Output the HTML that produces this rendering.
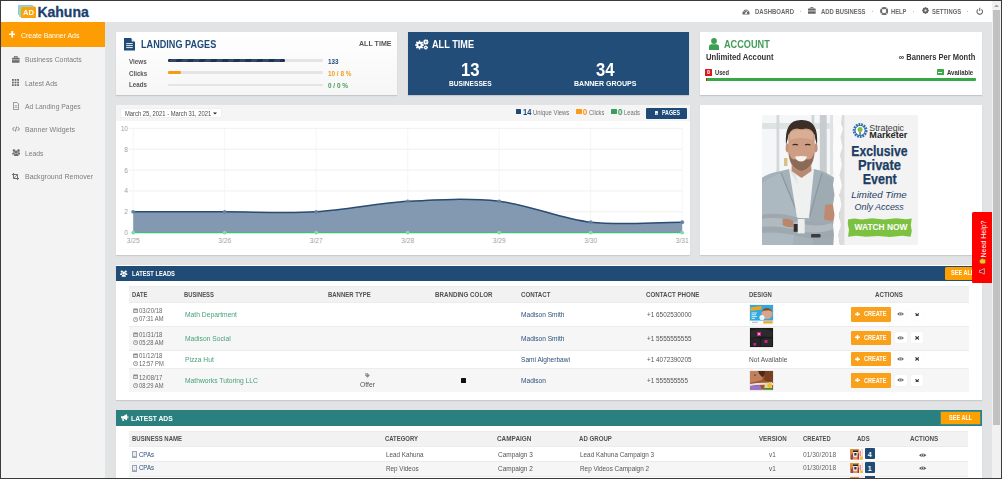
<!DOCTYPE html>
<html><head><meta charset="utf-8">
<style>
*{margin:0;padding:0;box-sizing:border-box}
html,body{width:1002px;height:479px;overflow:hidden;background:#fff;font-family:"Liberation Sans",sans-serif}
.a{position:absolute}
.t{position:absolute;white-space:nowrap;line-height:1}
#frame{position:absolute;left:0;top:0;width:1002px;height:479px;border:1px solid #3a3a3a;z-index:50;pointer-events:none}
#header{left:1px;top:1px;width:991px;height:21px;background:#fff}
#side{left:1px;top:22px;width:104px;height:456px;background:#f3f3f3}
#content{left:105px;top:22px;width:887px;height:456px;background:#e2e3e5}
#sb{left:992px;top:1px;width:9px;height:477px;background:#f1f1f1}
#thumb{left:993px;top:10px;width:7px;height:415px;background:#c1c1c1}
.card{position:absolute;background:#fff}
.nav{font-size:7px;font-weight:bold;color:#6a6a6a;top:7.9px}
.dot{width:1.7px;height:1.7px;background:#f99a1a;border-radius:1px;top:10.7px}
.menu{font-size:7.4px;color:#7d7d7d;left:25px}
.hdr{font-weight:bold;color:#fff}
.th{font-size:6.2px;font-weight:bold;color:#505050}
.td{font-size:6.3px;color:#555}
.lbl{font-size:7px;font-weight:bold;color:#585858}
.val{font-size:7px;font-weight:bold}
.ylab{font-size:6.6px;color:#a3a3a3}
.xlab{font-size:6.6px;color:#a3a3a3}
.leg{font-size:6.9px;color:#707070;top:110.1px}
</style></head><body>
<div id="frame"></div>
<div class="a" id="header"></div>
<div class="a" id="side"></div>
<div class="a" id="content"></div>
<div class="a" id="sb"></div>
<div class="a" id="thumb"></div>


<!-- logo -->
<div class="a" style="left:17.9px;top:4.8px;width:14.9px;height:10px;background:#94c3f3;border-radius:0.8px"></div>
<div class="a" style="left:19px;top:5.8px;width:15.5px;height:11px;background:#98dbb0;border-radius:0.8px"></div>
<div class="a" style="left:21px;top:7.3px;width:15px;height:10.5px;background:#fda20f;border-radius:0.5px"></div>
<div class="t" style="left: 22.8px; top: 8.8px; font-size: 8px; font-weight: bold; color: rgb(255, 255, 255); letter-spacing: 0px; transform: scaleX(0.9514); transform-origin: 0px 50%;">AD</div>
<div class="t" style="left:37.4px;top:5.1px;font-size:14px;font-weight:bold;color:#1b3f6e;-webkit-text-stroke:0.3px #1b3f6e">Kahuna</div>
<!-- nav -->
<svg class="a" style="left:742px;top:7.6px" width="8" height="7" viewBox="0 0 8 7"><path d="M0.6 6.4A3.6 3.6 0 1 1 7.4 6.4Z" fill="#6a6a6a"></path><path d="M4 5.2L5.8 2.6" stroke="#fff" stroke-width="0.9"></path><circle cx="4" cy="5.2" r="0.9" fill="#fff"></circle><circle cx="2" cy="3.6" r="0.5" fill="#fff"></circle><circle cx="4" cy="2.2" r="0.5" fill="#fff"></circle></svg>
<div class="t nav" style="left: 754.7px; letter-spacing: 0px; transform: scaleX(0.8571); transform-origin: 0px 50%;">DASHBOARD</div>
<div class="a dot" style="left:799.5px"></div>
<svg class="a" style="left:808px;top:7px" width="7.7" height="6.8" viewBox="0 0 7.7 6.8"><path d="M2.6 1.6V0.5H5.1V1.6" fill="none" stroke="#666" stroke-width="0.8"></path><rect x="0" y="1.5" width="7.7" height="5.3" rx="0.6" fill="#666"></rect><rect x="0" y="3.6" width="7.7" height="0.7" fill="#fff"></rect></svg>
<div class="t nav" style="left: 821px; letter-spacing: 0px; transform: scaleX(0.8411); transform-origin: 0px 50%;">ADD BUSINESS</div>
<div class="a dot" style="left:871.5px"></div>
<svg class="a" style="left:879.8px;top:7px" width="8.2" height="8.2" viewBox="0 0 8 8"><circle cx="4" cy="4" r="3" fill="none" stroke="#6a6a6a" stroke-width="1.9"></circle><path d="M1.3 1.3L2.7 2.7M6.7 1.3L5.3 2.7M1.3 6.7L2.7 5.3M6.7 6.7L5.3 5.3" stroke="#fff" stroke-width="0.8"></path></svg>
<div class="t nav" style="left: 891.4px; letter-spacing: 0px; transform: scaleX(0.8194); transform-origin: 0px 50%;">HELP</div>
<div class="a dot" style="left:912.5px"></div>
<svg class="a" style="left:921.5px;top:7px" width="7" height="7" viewBox="0 0 8 8"><circle cx="4" cy="4" r="2.6" fill="none" stroke="#666" stroke-width="1.6"></circle><path d="M4 0.2V7.8M0.2 4H7.8M1.3 1.3L6.7 6.7M6.7 1.3L1.3 6.7" stroke="#666" stroke-width="1.3"></path><circle cx="4" cy="4" r="1.1" fill="#fff"></circle></svg>
<div class="t nav" style="left: 932.2px; letter-spacing: 0px; transform: scaleX(0.8311); transform-origin: 0px 50%;">SETTINGS</div>
<div class="a dot" style="left:966.5px"></div>
<svg class="a" style="left:976px;top:6.5px" width="7.5" height="8" viewBox="0 0 8 8"><path d="M2.2 2.2A3 3 0 1 0 5.8 2.2" fill="none" stroke="#666" stroke-width="1.1"></path><path d="M4 0.5V4" stroke="#666" stroke-width="1.1"></path></svg>
<!-- scrollbar arrow -->
<svg class="a" style="left:993px;top:3px" width="7" height="5" viewBox="0 0 7 5"><path d="M1 4L3.5 1.5L6 4Z" fill="#a3a3a3"></path></svg>

<!-- sidebar -->
<div class="a" style="left:1px;top:22px;width:104px;height:25px;background:#fe9d03"></div>
<svg class="a" style="left:8.5px;top:31px" width="6.5" height="6.5" viewBox="0 0 6 6"><path d="M3 0V6M0 3H6" stroke="#fff" stroke-width="1.6"></path></svg>
<div class="t menu" style="left: 20.8px; top: 31.6px; color: rgb(255, 255, 255); letter-spacing: 0px; transform: scaleX(0.9351); transform-origin: 0px 50%;">Create Banner Ads</div>
<svg class="a" style="left:12px;top:55.5px" width="7.5" height="7" viewBox="0 0 8 7"><rect x="2.5" y="0.4" width="3" height="1.5" fill="none" stroke="#6d6d6d" stroke-width="0.8"></rect><rect x="0" y="1.6" width="8" height="5.4" rx="0.6" fill="#6d6d6d"></rect><rect x="0" y="3.6" width="8" height="0.6" fill="#f3f3f3"></rect></svg>
<div class="t menu" style="top: 56.1px; letter-spacing: 0px; transform: scaleX(0.9262); transform-origin: 0px 50%;">Business Contacts</div>
<svg class="a" style="left:12px;top:79px" width="7" height="7" viewBox="0 0 7 7" fill="#6d6d6d"><rect x="0" y="0" width="1.8" height="1.8"></rect><rect x="2.6" y="0" width="1.8" height="1.8"></rect><rect x="5.2" y="0" width="1.8" height="1.8"></rect><rect x="0" y="2.6" width="1.8" height="1.8"></rect><rect x="2.6" y="2.6" width="1.8" height="1.8"></rect><rect x="5.2" y="2.6" width="1.8" height="1.8"></rect><rect x="0" y="5.2" width="1.8" height="1.8"></rect><rect x="2.6" y="5.2" width="1.8" height="1.8"></rect><rect x="5.2" y="5.2" width="1.8" height="1.8"></rect></svg>
<div class="t menu" style="top: 79.6px; letter-spacing: 0px; transform: scaleX(0.9416); transform-origin: 0px 50%;">Latest Ads</div>
<svg class="a" style="left:12.5px;top:101.5px" width="6" height="8" viewBox="0 0 6 8"><path d="M0.4 0.4H4L5.6 2V7.6H0.4Z" fill="none" stroke="#777" stroke-width="0.8"></path><path d="M1.6 3.8H4.4M1.6 5.3H4.4" stroke="#777" stroke-width="0.6"></path></svg>
<div class="t menu" style="top: 103px; letter-spacing: 0px; transform: scaleX(0.9204); transform-origin: 0px 50%;">Ad Landing Pages</div>
<svg class="a" style="left:11.5px;top:126px" width="8" height="6" viewBox="0 0 8 6"><path d="M2.3 1L0.6 3L2.3 5M5.7 1L7.4 3L5.7 5M4.6 0.5L3.4 5.5" fill="none" stroke="#6d6d6d" stroke-width="0.8"></path></svg>
<div class="t menu" style="top: 126.4px; letter-spacing: 0px; transform: scaleX(0.9488); transform-origin: 0px 50%;">Banner Widgets</div>
<svg class="a" style="left:11.5px;top:148.5px" width="8.5" height="7.5" viewBox="0 0 8.5 7.5" fill="#6d6d6d"><circle cx="2" cy="1.6" r="1.3"></circle><circle cx="6.5" cy="1.6" r="1.3"></circle><circle cx="4.25" cy="3" r="1.5"></circle><path d="M0 5.5Q0 3.3 2 3.3Q2.8 3.3 3 3.6L2.5 5.5Z"></path><path d="M8.5 5.5Q8.5 3.3 6.5 3.3Q5.7 3.3 5.5 3.6L6 5.5Z"></path><path d="M1.8 7.5Q1.8 4.6 4.25 4.6Q6.7 4.6 6.7 7.5Z"></path></svg>
<div class="t menu" style="top: 149.8px; letter-spacing: 0px; transform: scaleX(0.9185); transform-origin: 0px 50%;">Leads</div>
<svg class="a" style="left:12px;top:172.5px" width="7" height="7" viewBox="0 0 7 7"><path d="M1.5 0V5.5H7M0 1.5H5.5V7" fill="none" stroke="#6d6d6d" stroke-width="1"></path><path d="M1.5 5.5L5.5 1.5" stroke="#6d6d6d" stroke-width="0.7"></path></svg>
<div class="t menu" style="top: 173.2px; letter-spacing: 0px; transform: scaleX(0.9513); transform-origin: 0px 50%;">Background Remover</div>

<!-- card 1 landing pages -->
<div class="card" style="left:116px;top:32px;width:281px;height:63px;background:linear-gradient(#fff,#f6f6f6);box-shadow:0 1px 1px rgba(0,0,0,0.12)"></div>
<svg class="a" style="left:124px;top:38px" width="11" height="12.5" viewBox="0 0 11 12.5"><path d="M0 0H7L11 4V12.5H0Z" fill="#1f4a78"></path><path d="M7.6 0.2V3.4H10.8Z" fill="#fff" opacity="0.85"></path><path d="M2.2 5.6H8.8M2.2 7.6H8.8M2.2 9.6H8.8" stroke="#fff" stroke-width="1" opacity="0.9"></path></svg>
<div class="t" style="left: 140.5px; top: 39.6px; font-size: 10.4px; font-weight: bold; color: rgb(31, 74, 120); letter-spacing: 0px; transform: scaleX(0.8762); transform-origin: 0px 50%;">LANDING PAGES</div>
<div class="t" style="left: 359px; top: 39.6px; font-size: 8px; font-weight: bold; color: rgb(85, 85, 85); letter-spacing: 0px; transform: scaleX(0.8844); transform-origin: 0px 50%;">ALL TIME</div>
<div class="t lbl" style="left: 129.4px; top: 57.7px; letter-spacing: 0px; transform: scaleX(0.8926); transform-origin: 0px 50%;">Views</div>
<div class="t lbl" style="left: 129.4px; top: 69.5px; letter-spacing: 0px; transform: scaleX(0.8824); transform-origin: 0px 50%;">Clicks</div>
<div class="t lbl" style="left: 129.4px; top: 81.4px; letter-spacing: 0px; transform: scaleX(0.8846); transform-origin: 0px 50%;">Leads</div>
<div class="a" style="left:168px;top:59.4px;width:155px;height:2.6px;border-radius:1.3px;background:#e3e5e7"></div>
<div class="a" style="left:168px;top:59.4px;width:116.6px;height:2.6px;border-radius:1.3px;background:repeating-linear-gradient(-60deg,#1e3350 0 5px,#34496a 5px 10px)"></div>
<div class="a" style="left:168px;top:71.3px;width:155px;height:2.6px;border-radius:1.3px;background:#e3e5e7"></div>
<div class="a" style="left:168px;top:71.3px;width:12.7px;height:2.6px;border-radius:1.3px;background:#f79c12"></div>
<div class="a" style="left:168px;top:83.5px;width:155px;height:2.6px;border-radius:1.3px;background:#e3e5e7"></div>
<div class="t val" style="left: 328px; top: 57.8px; color: rgb(31, 74, 120); letter-spacing: 0px; transform: scaleX(0.8984); transform-origin: 0px 50%;">133</div>
<div class="t val" style="left: 328px; top: 69.6px; color: rgb(245, 156, 26); letter-spacing: 0px; transform: scaleX(0.9109); transform-origin: 0px 50%;">10 / 8 %</div>
<div class="t val" style="left: 328px; top: 81.5px; color: rgb(63, 154, 90); letter-spacing: 0px; transform: scaleX(0.9176); transform-origin: 0px 50%;">0 / 0 %</div>

<!-- card 2 all time -->
<div class="card" style="left:408px;top:32px;width:281.2px;height:62.6px;background:#214d78;box-shadow:0 1px 1px rgba(0,0,0,0.12)"></div>
<svg class="a" style="left:414.5px;top:38.5px" width="14" height="11" viewBox="0 0 14 11"><g fill="#fff"><circle cx="4.5" cy="6" r="3.2"></circle><path d="M4.5 1.6V10.4M0.1 6H8.9M1.4 2.9L7.6 9.1M7.6 2.9L1.4 9.1" stroke="#fff" stroke-width="1.6"></path><circle cx="10.8" cy="3" r="2"></circle><path d="M10.8 0.2V5.8M8 3H13.6M8.8 1L12.8 5M12.8 1L8.8 5" stroke="#fff" stroke-width="1.1"></path><circle cx="10.8" cy="8.6" r="1.6"></circle><path d="M10.8 6.4V10.8M8.6 8.6H13M9.3 7.1L12.3 10.1M12.3 7.1L9.3 10.1" stroke="#fff" stroke-width="0.9"></path></g><circle cx="4.5" cy="6" r="1.2" fill="#214d78"></circle><circle cx="10.8" cy="3" r="0.8" fill="#214d78"></circle><circle cx="10.8" cy="8.6" r="0.6" fill="#214d78"></circle></svg>
<div class="t hdr" style="left: 432px; top: 39.9px; font-size: 10.4px; letter-spacing: 0px; transform: scaleX(0.8802); transform-origin: 0px 50%;">ALL TIME</div>
<div class="t hdr" style="left: 460.6px; top: 59.9px; font-size: 19px; letter-spacing: 0px; transform: scaleX(0.8798); transform-origin: 0px 50%;">13</div>
<div class="t hdr" style="left: 448.5px; top: 79.9px; font-size: 7px; letter-spacing: 0px; transform: scaleX(0.9463); transform-origin: 0px 50%;">BUSINESSES</div>
<div class="t hdr" style="left: 595.5px; top: 59.9px; font-size: 19px; letter-spacing: 0px; transform: scaleX(0.8751); transform-origin: 0px 50%;">34</div>
<div class="t hdr" style="left: 573.8px; top: 79.9px; font-size: 7px; letter-spacing: 0px; transform: scaleX(1.0043); transform-origin: 0px 50%;">BANNER GROUPS</div>

<!-- card 3 account -->
<div class="card" style="left:700px;top:32px;width:282px;height:63px;box-shadow:0 1px 1px rgba(0,0,0,0.12)"></div>
<svg class="a" style="left:708.5px;top:38px" width="10" height="12" viewBox="0 0 10 12" fill="#3e9e55"><circle cx="5" cy="3" r="2.9"></circle><path d="M0 12V9Q0 6.3 2.6 6.3H7.4Q10 6.3 10 9V12Z"></path></svg>
<div class="t" style="left: 724px; top: 39.6px; font-size: 10.4px; font-weight: bold; color: rgb(62, 158, 85); letter-spacing: 0px; transform: scaleX(0.8816); transform-origin: 0px 50%;">ACCOUNT</div>
<div class="t" style="left: 705.5px; top: 52.7px; font-size: 8.6px; font-weight: bold; color: rgb(51, 51, 51); letter-spacing: 0px; transform: scaleX(0.8929); transform-origin: 0px 50%;">Unlimited Account</div>
<div class="t" style="right: 26.5px; top: 52.7px; font-size: 8.6px; font-weight: bold; color: rgb(51, 51, 51); letter-spacing: 0px; transform: scaleX(0.8762); transform-origin: 100% 50%;">∞ Banners Per Month</div>
<div class="a" style="left:705.4px;top:68.9px;width:6.5px;height:6.9px;background:#d9161c;border-radius:0.6px"></div>
<div class="t" style="left:707.1px;top:70.1px;font-size:5.6px;font-weight:bold;color:#fff">0</div>
<div class="t" style="left: 714.8px; top: 70.1px; font-size: 6.7px; font-weight: bold; color: rgb(51, 51, 51); letter-spacing: 0px; transform: scaleX(0.8558); transform-origin: 0px 50%;">Used</div>
<div class="a" style="left:936.6px;top:68.8px;width:7px;height:6.5px;background:#3aaa4a;border-radius:0.5px"></div>
<div class="a" style="left:938.3px;top:71.5px;width:3.6px;height:1.2px;background:#fff"></div>
<div class="t" style="left: 946.8px; top: 70px; font-size: 6.7px; font-weight: bold; color: rgb(51, 51, 51); letter-spacing: 0px; transform: scaleX(0.8996); transform-origin: 0px 50%;">Available</div>
<div class="a" style="left:705.5px;top:78px;width:270px;height:2.6px;border-radius:1px;background:#37a847"></div>
<div class="a" style="left:705.5px;top:78px;width:1px;height:2.6px;background:#d9161c"></div>

<!-- chart card -->
<div class="card" style="left:116px;top:105px;width:574px;height:150px;box-shadow:0 1px 1px rgba(0,0,0,0.1)"></div>
<div class="a" style="left:116px;top:105px;width:574px;height:16px;background:#f5f5f5"></div>
<div class="a" style="left:119.8px;top:107.8px;width:102.2px;height:10.5px;background:#fff;border:0.5px solid #f0f0f0"></div>
<div class="t" style="left: 125.2px; top: 110.5px; font-size: 6.6px; color: rgb(74, 74, 74); letter-spacing: 0px; transform: scaleX(0.8841); transform-origin: 0px 50%;">March 25, 2021 - March 31, 2021</div>
<svg class="a" style="left:213.2px;top:112.3px" width="4" height="3" viewBox="0 0 4 3"><path d="M0 0.4H4L2 2.6Z" fill="#222"></path></svg>
<div class="a" style="left:515.5px;top:108.8px;width:5.6px;height:5.1px;background:#1f4a78;border-radius:0.6px"></div>
<div class="t" style="left: 522.8px; top: 107.8px; font-size: 8.4px; font-weight: bold; color: rgb(31, 74, 120); letter-spacing: 0px; transform: scaleX(0.9005); transform-origin: 0px 50%;">14</div>
<div class="t leg" style="left: 532.7px; letter-spacing: 0px; transform: scaleX(0.864); transform-origin: 0px 50%;">Unique Views</div>
<div class="a" style="left:576.4px;top:108.8px;width:5.6px;height:5.1px;background:#f99b1c;border-radius:0.6px"></div>
<div class="t" style="left:582.8px;top:107.8px;font-size:8.4px;font-weight:bold;color:#f99b1c">0</div>
<div class="t leg" style="left: 588.7px; letter-spacing: 0px; transform: scaleX(0.8327); transform-origin: 0px 50%;">Clicks</div>
<div class="a" style="left:611.3px;top:108.8px;width:5.6px;height:5.1px;background:#3a9e5f;border-radius:0.6px"></div>
<div class="t" style="left:617.8px;top:107.8px;font-size:8.4px;font-weight:bold;color:#3a9e5f">0</div>
<div class="t leg" style="left: 623.8px; letter-spacing: 0px; transform: scaleX(0.8413); transform-origin: 0px 50%;">Leads</div>
<div class="a" style="left:646px;top:107.5px;width:40.7px;height:11.3px;background:#1f4a78;border-radius:1px"></div>
<svg class="a" style="left:654.6px;top:111px" width="3.8" height="4.4" viewBox="0 0 4.5 5.5"><path d="M0 0H3L4.5 1.5V5.5H0Z" fill="#fff"></path><path d="M1 3H3.5M1 4.2H3.5" stroke="#1f4a78" stroke-width="0.5"></path></svg>
<div class="t" style="left: 661.7px; top: 109.6px; font-size: 6.6px; font-weight: bold; color: rgb(255, 255, 255); letter-spacing: 0px; transform: scaleX(0.7961); transform-origin: 0px 50%;">PAGES</div>
<svg class="a" style="left:0;top:0" width="1002" height="479" viewBox="0 0 1002 479">
<path d="M129 128.4H682.2" stroke="#ececec" stroke-width="0.8"></path><path d="M129 149.2H682.2" stroke="#ececec" stroke-width="0.8"></path><path d="M129 170.1H682.2" stroke="#ececec" stroke-width="0.8"></path><path d="M129 190.9H682.2" stroke="#ececec" stroke-width="0.8"></path><path d="M129 211.8H682.2" stroke="#ececec" stroke-width="0.8"></path><path d="M133.2 127.5V232.6" stroke="#f2f2f2" stroke-width="0.8"></path><path d="M224.7 127.5V232.6" stroke="#f2f2f2" stroke-width="0.8"></path><path d="M316.2 127.5V232.6" stroke="#f2f2f2" stroke-width="0.8"></path><path d="M407.7 127.5V232.6" stroke="#f2f2f2" stroke-width="0.8"></path><path d="M499.2 127.5V232.6" stroke="#f2f2f2" stroke-width="0.8"></path><path d="M590.7 127.5V232.6" stroke="#f2f2f2" stroke-width="0.8"></path><path d="M682.2 127.5V232.6" stroke="#f2f2f2" stroke-width="0.8"></path>
<path d="M133.2,211.8C163.7,211.8,194.2,211.8,224.7,211.8C255.2,211.8,285.7,213.5,316.2,211.8C346.7,210.0,377.2,203.1,407.7,201.3C438.2,199.6,468.7,197.9,499.2,201.3C529.7,204.8,560.2,218.7,590.7,222.2C621.2,225.7,651.7,222.2,682.2,222.2L682.2,232.6L133.2,232.6Z" fill="#8399b1"></path>
<path d="M133.2,211.8C163.7,211.8,194.2,211.8,224.7,211.8C255.2,211.8,285.7,213.5,316.2,211.8C346.7,210.0,377.2,203.1,407.7,201.3C438.2,199.6,468.7,197.9,499.2,201.3C529.7,204.8,560.2,218.7,590.7,222.2C621.2,225.7,651.7,222.2,682.2,222.2" fill="none" stroke="#2a4b72" stroke-width="1.5"></path>
<path d="M133.2 232.6H682.2" stroke="#3fc07a" stroke-width="1.2"></path>
<circle cx="133.2" cy="211.8" r="1.9" fill="#6582a3"></circle><circle cx="133.2" cy="232.6" r="1.9" fill="#86d9a6"></circle><circle cx="224.7" cy="211.8" r="1.9" fill="#6582a3"></circle><circle cx="224.7" cy="232.6" r="1.9" fill="#86d9a6"></circle><circle cx="316.2" cy="211.8" r="1.9" fill="#6582a3"></circle><circle cx="316.2" cy="232.6" r="1.9" fill="#86d9a6"></circle><circle cx="407.7" cy="201.3" r="1.9" fill="#6582a3"></circle><circle cx="407.7" cy="232.6" r="1.9" fill="#86d9a6"></circle><circle cx="499.2" cy="201.3" r="1.9" fill="#6582a3"></circle><circle cx="499.2" cy="232.6" r="1.9" fill="#86d9a6"></circle><circle cx="590.7" cy="222.2" r="1.9" fill="#6582a3"></circle><circle cx="590.7" cy="232.6" r="1.9" fill="#86d9a6"></circle><circle cx="682.2" cy="222.2" r="1.9" fill="#6582a3"></circle><circle cx="682.2" cy="232.6" r="1.9" fill="#86d9a6"></circle>
</svg>
<div class="t ylab" style="right:874.0px;top:125.8px">10</div>
<div class="t ylab" style="right:874.0px;top:146.6px">8</div>
<div class="t ylab" style="right:874.0px;top:167.5px">6</div>
<div class="t ylab" style="right:874.0px;top:188.3px">4</div>
<div class="t ylab" style="right:874.0px;top:209.2px">2</div>
<div class="t ylab" style="right:874.0px;top:230.0px">0</div>
<div class="t xlab" style="left:133.2px;top:237.6px;transform:translateX(-50%)">3/25</div>
<div class="t xlab" style="left:224.7px;top:237.6px;transform:translateX(-50%)">3/26</div>
<div class="t xlab" style="left:316.2px;top:237.6px;transform:translateX(-50%)">3/27</div>
<div class="t xlab" style="left:407.7px;top:237.6px;transform:translateX(-50%)">3/28</div>
<div class="t xlab" style="left:499.2px;top:237.6px;transform:translateX(-50%)">3/29</div>
<div class="t xlab" style="left:590.7px;top:237.6px;transform:translateX(-50%)">3/30</div>
<div class="t xlab" style="left:682.2px;top:237.6px;transform:translateX(-50%)">3/31</div>

<!-- ad card -->
<div class="card" style="left:700px;top:105px;width:282px;height:150px;box-shadow:0 1px 1px rgba(0,0,0,0.1)"></div>

<!-- ad creative -->
<svg class="a" style="left:762px;top:115px" width="156" height="130" viewBox="0 0 156 130">
<defs><filter id="bl" x="-5%" y="-5%" width="110%" height="110%"><feGaussianBlur stdDeviation="0.7"></feGaussianBlur></filter><clipPath id="pc"><rect x="0" y="0" width="80" height="130"></rect></clipPath></defs>
<rect x="0" y="0" width="156" height="130" fill="#f3f3f3"></rect>
<g clip-path="url(#pc)"><g filter="url(#bl)">
<rect x="-2" y="-2" width="84" height="134" fill="#f4f6f7"></rect>
<rect x="-2" y="8" width="84" height="6" fill="#dde2e3"></rect>
<rect x="14.5" y="0" width="2.8" height="80" fill="#d3d8da"></rect>
<rect x="49.6" y="0" width="2.7" height="14" fill="#cfd4d6"></rect>
<rect x="57.8" y="0" width="6.9" height="90" fill="#c7ccce"></rect>
<rect x="68" y="0" width="3" height="60" fill="#dfe3e4"></rect>
<rect x="22" y="43" width="3.5" height="8" fill="#d8c08a"></rect>
<!-- suit -->
<path d="M-2 64Q6 58 19 56L27 54L39 64L52 54L60 56Q70 60 76 66L78 132H-2Z" fill="#a4b1b9"></path>
<path d="M-2 70Q8 62 19 58L36 102L30 132H-2Z" fill="#adb9c0"></path>
<path d="M78 72Q70 62 60 58L47.5 102L52 132H78Z" fill="#9eabb3"></path>
<path d="M19 58L37 102" stroke="#8d979d" stroke-width="1.2"></path>
<path d="M60 58L47.5 102" stroke="#8d979d" stroke-width="1.2"></path>
<!-- shirt -->
<path d="M27 54L39 63L52 54L47 103L35 103Z" fill="#eff1f1"></path>
<path d="M27 54L34 60L36 70Z" fill="#dfe3e4"></path>
<!-- arms -->
<path d="M-2 100Q18 96 40 104Q56 110 72 104L76 120Q58 126 40 122Q18 116 -2 118Z" fill="#9ea8ae"></path>
<path d="M-2 104Q18 101 38 108Q54 113 70 108L72 114Q54 120 38 116Q18 110 -2 112Z" fill="#b0babf"></path>
<path d="M63 90Q70 88 74.5 92L73 105Q67 107 62 104Z" fill="#c08a70"></path>
<path d="M20.6 104Q26 103 31.7 106L31 112Q25 113 20.6 110Z" fill="#b9876c"></path>
<rect x="31.7" y="109" width="5.5" height="7.8" fill="#2f2f2f"></rect>
<rect x="35.7" y="104" width="7" height="14.4" fill="#eceeee"></rect>
<rect x="49" y="119" width="9.6" height="3.4" rx="1" fill="#3a3d40"></rect>
<!-- neck & head -->
<path d="M30 44H49L49.5 56L39.5 63L29.5 56Z" fill="#b98a72"></path>
<ellipse cx="25.6" cy="33" rx="2" ry="4.4" fill="#c2917a"></ellipse>
<ellipse cx="53.6" cy="33" rx="2" ry="4.4" fill="#c2917a"></ellipse>
<path d="M26.3 22Q26.3 11 39.5 11Q52.7 11 52.7 22L52.7 38Q51 55 39.5 56Q28 55 26.3 38Z" fill="#cd9e84"></path>
<path d="M28 17Q39.5 12.5 51 17L51 25Q39.5 21 28 25Z" fill="#d8ae94"></path>
<path d="M26.6 37Q28 54 39.5 56Q51 54 52.4 37Q50.5 45 46 44.5Q39.5 42.5 33 44.5Q28.5 45 26.6 37Z" fill="#8c6a58"></path>
<path d="M33 41.6Q39 40.3 45 41.6Q43.6 46.6 39 46.6Q34.4 46.6 33 41.6Z" fill="#f6f1ec"></path>
<path d="M30.5 30Q33.3 28.7 36 30M43 30Q45.7 28.7 48.5 30" fill="none" stroke="#3a2a22" stroke-width="1.1"></path>
<path d="M24 30Q22 4.5 39.5 5Q57 4.5 55 30L53.3 24Q52.5 14 44 13.5Q39.5 15 35 13.5Q26.5 14 25.7 24Z" fill="#3b2e28"></path>
</g></g>
<!-- torn edge -->
<path d="M71.3 0H80L79 8L81 14L78.5 22L80.5 32L78 40L80 50L77.5 60L80 70L77.5 80L79.5 90L77 100L79 110L76.5 120L78 130H71.3L72 120L71 110L72.5 100L71 90L72.5 80L71 70L72.5 60L71 50L72.5 40L71 30L72.5 20L71 10Z" fill="#fbfbfb"></path>
<path d="M80 0L79 8L81 14L78.5 22L80.5 32L78 40L80 50L77.5 60L80 70L77.5 80L79.5 90L77 100L79 110L76.5 120L78 130H82.4V0Z" fill="#dcdcdc"></path>
<!-- logo -->
<circle cx="98.1" cy="15.5" r="6" fill="none" stroke="#2f6fb3" stroke-width="2.8" stroke-dasharray="1.7 0.9"></circle>
<circle cx="98.1" cy="15.5" r="5.1" fill="none" stroke="#2f6fb3" stroke-width="1"></circle>
<circle cx="98.1" cy="15.5" r="4.2" fill="#fff"></circle>
<circle cx="98.1" cy="14.6" r="2.5" fill="#7cc242"></circle>
<rect x="97.1" y="17" width="2" height="3.2" fill="#8a8a8a"></rect>
<text x="107.3" y="15.6" font-family="Liberation Sans" font-size="8.8" fill="#3a3a3a" textLength="34.7" lengthAdjust="spacingAndGlyphs">Strategic</text>
<text x="107.3" y="23" font-family="Liberation Sans" font-size="8.8" font-weight="bold" fill="#1f1f1f" textLength="38" lengthAdjust="spacingAndGlyphs">Marketer</text>
<g font-family="Liberation Sans" font-weight="bold" fill="#1d3d63" font-size="14" stroke="#1d3d63" stroke-width="0.25">
<text x="89.3" y="41.1" textLength="56.2" lengthAdjust="spacingAndGlyphs">Exclusive</text>
<text x="95.9" y="55" textLength="43.1" lengthAdjust="spacingAndGlyphs">Private</text>
<text x="100.7" y="69.2" textLength="34" lengthAdjust="spacingAndGlyphs">Event</text>
</g>
<g font-family="Liberation Sans" font-style="italic" fill="#1d3d63" font-size="9.6">
<text x="89.3" y="82.8" textLength="55.4" lengthAdjust="spacingAndGlyphs">Limited Time</text>
<text x="92.5" y="95" textLength="49.3" lengthAdjust="spacingAndGlyphs">Only Access</text>
</g>
<path d="M86 104.5L92 103.4L100 104.6L110 103.3L122 104.5L134 103.2L144 104.3L149.8 103.6L148.8 110L149.8 116L148.6 121.8L140 120.8L128 122L116 120.9L104 121.8L94 120.7L86 121.8L87 115L85.8 109Z" fill="#7dc141"></path>
<text x="92.5" y="115" font-family="Liberation Sans" font-weight="bold" font-size="8.6" fill="#fff" textLength="53" lengthAdjust="spacingAndGlyphs">WATCH NOW</text>
</svg>









<!-- tables -->
<div class="card" style="left:116px;top:265px;width:866px;height:134.5px;box-shadow:0 1px 1px rgba(0,0,0,0.1)"></div>
<div class="a" style="left:116px;top:265.5px;width:866px;height:15.5px;background:#1f4b76"></div>
<svg class="a" style="left:120px;top:269.5px" width="7.5" height="7" viewBox="0 0 8.5 7.5" fill="#fff"><circle cx="2" cy="1.6" r="1.3"></circle><circle cx="6.5" cy="1.6" r="1.3"></circle><circle cx="4.25" cy="3" r="1.5"></circle><path d="M0 5.5Q0 3.3 2 3.3Q2.8 3.3 3 3.6L2.5 5.5Z"></path><path d="M8.5 5.5Q8.5 3.3 6.5 3.3Q5.7 3.3 5.5 3.6L6 5.5Z"></path><path d="M1.8 7.5Q1.8 4.6 4.25 4.6Q6.7 4.6 6.7 7.5Z"></path></svg>
<div class="t hdr" style="left: 131.8px; top: 269.7px; font-size: 7.3px; letter-spacing: 0px; transform: scaleX(0.7858); transform-origin: 0px 50%;">LATEST LEADS</div>
<div class="a" style="left:945px;top:266.8px;width:40px;height:12.8px;background:#ffa000;border-radius:1.5px"></div>
<div class="t hdr" style="left: 950.9px; top: 270px; font-size: 6.5px; letter-spacing: 0px; transform: scaleX(0.8524); transform-origin: 0px 50%;">SEE ALL</div>
<div class="a" style="left:129px;top:286.0px;width:839.6px;height:16.0px;background:#f2f2f2;border-top:0.5px solid #ececec"></div>
<div class="a" style="left:129px;top:302.0px;width:839.6px;height:24.0px;background:#fff;border-top:0.5px solid #ececec"></div>
<div class="a" style="left:129px;top:326.0px;width:839.6px;height:24.0px;background:#f6f6f6;border-top:0.5px solid #ececec"></div>
<div class="a" style="left:129px;top:350.0px;width:839.6px;height:18.0px;background:#fff;border-top:0.5px solid #ececec"></div>
<div class="a" style="left:129px;top:368.0px;width:839.6px;height:24.4px;background:#f6f6f6;border-top:0.5px solid #ececec"></div>
<div class="t th" style="left: 131.8px; top: 291.9px; font-size: 6.9px; letter-spacing: 0px; transform: scaleX(0.8384); transform-origin: 0px 50%;">DATE</div>
<div class="t th" style="left: 184px; top: 291.9px; font-size: 6.9px; letter-spacing: 0px; transform: scaleX(0.8458); transform-origin: 0px 50%;">BUSINESS</div>
<div class="t th" style="left: 328.1px; top: 291.9px; font-size: 6.9px; letter-spacing: 0px; transform: scaleX(0.8645); transform-origin: 0px 50%;">BANNER TYPE</div>
<div class="t th" style="left: 434.8px; top: 291.9px; font-size: 6.9px; letter-spacing: 0px; transform: scaleX(0.8993); transform-origin: 0px 50%;">BRANDING COLOR</div>
<div class="t th" style="left: 520.5px; top: 291.9px; font-size: 6.9px; letter-spacing: 0px; transform: scaleX(0.8863); transform-origin: 0px 50%;">CONTACT</div>
<div class="t th" style="left: 645.8px; top: 291.9px; font-size: 6.9px; letter-spacing: 0px; transform: scaleX(0.8977); transform-origin: 0px 50%;">CONTACT PHONE</div>
<div class="t th" style="left: 748.5px; top: 291.9px; font-size: 6.9px; letter-spacing: 0px; transform: scaleX(0.8629); transform-origin: 0px 50%;">DESIGN</div>
<div class="t th" style="left: 874.6px; top: 291.9px; font-size: 6.9px; letter-spacing: 0px; transform: scaleX(0.8963); transform-origin: 0px 50%;">ACTIONS</div>
<svg class="a" style="left:133.3px;top:307.9px" width="5.1" height="5.1" viewBox="0 0 5 5"><rect x="0.2" y="0.6" width="4.6" height="4.2" rx="0.4" fill="#8a8a8a"></rect><rect x="0.9" y="2" width="3.2" height="2.2" fill="#dcdcdc"></rect></svg>
<div class="t td" style="left: 139.2px; top: 308.3px; font-size: 6.6px; color: rgb(102, 102, 102); letter-spacing: 0px; transform: scaleX(0.9076); transform-origin: 0px 50%;">03/20/18</div>
<svg class="a" style="left:133.4px;top:316.6px" width="5.1" height="5.1" viewBox="0 0 5 5"><circle cx="2.5" cy="2.5" r="2.1" fill="none" stroke="#777" stroke-width="0.7"></circle><path d="M2.5 1.2V2.6H3.6" fill="none" stroke="#777" stroke-width="0.5"></path></svg>
<div class="t td" style="left: 139.2px; top: 316.1px; font-size: 6.5px; color: rgb(102, 102, 102); letter-spacing: 0px; transform: scaleX(0.8919); transform-origin: 0px 50%;">07:31 AM</div>
<div class="t td" style="left: 185.2px; top: 311.4px; color: rgb(70, 161, 122); font-size: 7px; letter-spacing: 0px; transform: scaleX(0.9613); transform-origin: 0px 50%;">Math Department</div>
<div class="t td" style="left: 521.4px; top: 311.4px; color: rgb(45, 79, 124); font-size: 7px; letter-spacing: 0px; transform: scaleX(0.9396); transform-origin: 0px 50%;">Madison Smith</div>
<div class="t td" style="left: 646.7px; top: 311.4px; font-size: 7px; letter-spacing: 0px; transform: scaleX(0.9108); transform-origin: 0px 50%;">+1 6502530000</div>
<svg class="a" style="left:749.7px;top:304.7px;box-shadow:0 0 1px rgba(0,0,0,0.3)" width="23.3" height="19.1" viewBox="0 0 23.3 19.1"><rect width="23.3" height="19.1" fill="#2eaae0"></rect><path d="M0.5 2.5L11.5 1V4.5L0.5 6Z" fill="#f7a21b"></path><circle cx="17" cy="8.5" r="5.5" fill="#d9a58a"></circle><path d="M11.8 7Q13 2.8 17 3Q21 3 22.3 7Q20 4.8 17 5.5Q14 5 11.8 7Z" fill="#7a4e35"></path><circle cx="12" cy="12.5" r="2.6" fill="#e8f6fb"></circle><path d="M1.5 8H7M1.5 9.8H6M1.5 11.6H7M1.5 13.4H5" stroke="#e6f4fa" stroke-width="0.9"></path><rect y="15.6" width="23.3" height="3.5" fill="#fff"></rect><rect x="13.2" y="16.2" width="9.4" height="2.3" fill="#f7a21b"></rect><rect x="2" y="16.8" width="6" height="0.8" fill="#999"></rect></svg>
<div class="a" style="left:851px;top:307.0px;width:40px;height:14.5px;background:#f9a11b;border-radius:1.2px"></div>
<svg class="a" style="left:855.3px;top:311.6px" width="5" height="4.6" viewBox="0 0 5 4.6"><path d="M2.5 0V4.6M0.1 2.3H4.9" stroke="#fff" stroke-width="1.5"></path></svg>
<div class="t hdr" style="left: 863.8px; top: 311.3px; font-size: 6.3px; letter-spacing: 0px; transform: scaleX(0.8811); transform-origin: 0px 50%;">CREATE</div>
<div class="a" style="left:894.5px;top:308.5px;width:12.3px;height:11px;background:#fff;box-shadow:0 0 0.8px rgba(0,0,0,0.15);border-radius:1px"></div>
<svg class="a" style="left:897.1px;top:312.2px" width="7" height="3.8" viewBox="0 0 7 3.8"><path d="M0 1.9Q3.5 -1.3 7 1.9Q3.5 5.1 0 1.9Z" fill="#6f6f6f"></path><circle cx="3.5" cy="1.9" r="1.25" fill="#e8e8e8"></circle><circle cx="3.5" cy="1.9" r="0.75" fill="#555"></circle></svg>
<div class="a" style="left:911.2px;top:308.5px;width:11.8px;height:11px;background:#fff;box-shadow:0 0 0.8px rgba(0,0,0,0.15);border-radius:1px"></div>
<svg class="a" style="left:914.9px;top:312.5px" width="4.4" height="3.8" viewBox="0 0 4.4 3.8"><path d="M0.4 0.3L4 3.5M4 0.3L0.4 3.5" stroke="#3a3a3a" stroke-width="1.1"></path></svg>
<svg class="a" style="left:133.3px;top:331.6px" width="5.1" height="5.1" viewBox="0 0 5 5"><rect x="0.2" y="0.6" width="4.6" height="4.2" rx="0.4" fill="#8a8a8a"></rect><rect x="0.9" y="2" width="3.2" height="2.2" fill="#dcdcdc"></rect></svg>
<div class="t td" style="left: 139.2px; top: 332px; font-size: 6.6px; color: rgb(102, 102, 102); letter-spacing: 0px; transform: scaleX(0.9076); transform-origin: 0px 50%;">01/31/18</div>
<svg class="a" style="left:133.4px;top:340.3px" width="5.1" height="5.1" viewBox="0 0 5 5"><circle cx="2.5" cy="2.5" r="2.1" fill="none" stroke="#777" stroke-width="0.7"></circle><path d="M2.5 1.2V2.6H3.6" fill="none" stroke="#777" stroke-width="0.5"></path></svg>
<div class="t td" style="left: 139.2px; top: 339.8px; font-size: 6.5px; color: rgb(102, 102, 102); letter-spacing: 0px; transform: scaleX(0.8919); transform-origin: 0px 50%;">05:28 AM</div>
<div class="t td" style="left: 185.2px; top: 334.5px; color: rgb(70, 161, 122); font-size: 7px; letter-spacing: 0px; transform: scaleX(0.9613); transform-origin: 0px 50%;">Madison Social</div>
<div class="t td" style="left: 521.4px; top: 334.5px; color: rgb(45, 79, 124); font-size: 7px; letter-spacing: 0px; transform: scaleX(0.9396); transform-origin: 0px 50%;">Madison Smith</div>
<div class="t td" style="left: 646.7px; top: 334.5px; font-size: 7px; letter-spacing: 0px; transform: scaleX(0.9108); transform-origin: 0px 50%;">+1 5555555555</div>
<svg class="a" style="left:749.7px;top:328px;box-shadow:0 0 1px rgba(0,0,0,0.3)" width="23.3" height="19" viewBox="0 0 23.3 19"><rect width="23.3" height="19" fill="#1b1b1d"></rect><path d="M1 3Q5 0.6 12 1Q20 1 22 3.5V9Q12 8 1 9.5Z" fill="#2b2b2e"></path><path d="M1 11Q6 9 10 11V18H1Z" fill="#262628"></path><path d="M11 12Q16 9 22 11V18H11Z" fill="#2a2a2d"></path><rect x="7" y="4" width="4" height="4" fill="#d0238e"></rect><rect x="8" y="5" width="2" height="2" fill="#f29ccd"></rect><rect x="14.5" y="12" width="3" height="3" fill="#c8208a"></rect><rect x="3.5" y="15" width="2.6" height="2.6" fill="#c8208a"></rect></svg>
<div class="a" style="left:851px;top:330.7px;width:40px;height:14.5px;background:#f9a11b;border-radius:1.2px"></div>
<svg class="a" style="left:855.3px;top:335.3px" width="5" height="4.6" viewBox="0 0 5 4.6"><path d="M2.5 0V4.6M0.1 2.3H4.9" stroke="#fff" stroke-width="1.5"></path></svg>
<div class="t hdr" style="left: 863.8px; top: 335px; font-size: 6.3px; letter-spacing: 0px; transform: scaleX(0.8811); transform-origin: 0px 50%;">CREATE</div>
<div class="a" style="left:894.5px;top:332.2px;width:12.3px;height:11px;background:#fff;box-shadow:0 0 0.8px rgba(0,0,0,0.15);border-radius:1px"></div>
<svg class="a" style="left:897.1px;top:335.9px" width="7" height="3.8" viewBox="0 0 7 3.8"><path d="M0 1.9Q3.5 -1.3 7 1.9Q3.5 5.1 0 1.9Z" fill="#6f6f6f"></path><circle cx="3.5" cy="1.9" r="1.25" fill="#e8e8e8"></circle><circle cx="3.5" cy="1.9" r="0.75" fill="#555"></circle></svg>
<div class="a" style="left:911.2px;top:332.2px;width:11.8px;height:11px;background:#fff;box-shadow:0 0 0.8px rgba(0,0,0,0.15);border-radius:1px"></div>
<svg class="a" style="left:914.9px;top:336.2px" width="4.4" height="3.8" viewBox="0 0 4.4 3.8"><path d="M0.4 0.3L4 3.5M4 0.3L0.4 3.5" stroke="#3a3a3a" stroke-width="1.1"></path></svg>
<svg class="a" style="left:133.3px;top:352.6px" width="5.1" height="5.1" viewBox="0 0 5 5"><rect x="0.2" y="0.6" width="4.6" height="4.2" rx="0.4" fill="#8a8a8a"></rect><rect x="0.9" y="2" width="3.2" height="2.2" fill="#dcdcdc"></rect></svg>
<div class="t td" style="left: 139.2px; top: 353px; font-size: 6.6px; color: rgb(102, 102, 102); letter-spacing: 0px; transform: scaleX(0.9076); transform-origin: 0px 50%;">01/12/18</div>
<svg class="a" style="left:133.4px;top:361.3px" width="5.1" height="5.1" viewBox="0 0 5 5"><circle cx="2.5" cy="2.5" r="2.1" fill="none" stroke="#777" stroke-width="0.7"></circle><path d="M2.5 1.2V2.6H3.6" fill="none" stroke="#777" stroke-width="0.5"></path></svg>
<div class="t td" style="left: 139.2px; top: 360.8px; font-size: 6.5px; color: rgb(102, 102, 102); letter-spacing: 0px; transform: scaleX(0.8919); transform-origin: 0px 50%;">12:57 PM</div>
<div class="t td" style="left: 185.2px; top: 355.9px; color: rgb(70, 161, 122); font-size: 7px; letter-spacing: 0px; transform: scaleX(0.9613); transform-origin: 0px 50%;">Pizza Hut</div>
<div class="t td" style="left: 521.4px; top: 355.9px; color: rgb(45, 79, 124); font-size: 7px; letter-spacing: 0px; transform: scaleX(0.9396); transform-origin: 0px 50%;">Sami Algherbawi</div>
<div class="t td" style="left: 646.7px; top: 355.9px; font-size: 7px; letter-spacing: 0px; transform: scaleX(0.9108); transform-origin: 0px 50%;">+1 4072390205</div>
<div class="t td" style="left: 749px; top: 355.9px; font-size: 7px; letter-spacing: 0px; transform: scaleX(0.9427); transform-origin: 0px 50%;">Not Available</div>
<div class="a" style="left:851px;top:351.9px;width:40px;height:14.5px;background:#f9a11b;border-radius:1.2px"></div>
<svg class="a" style="left:855.3px;top:356.5px" width="5" height="4.6" viewBox="0 0 5 4.6"><path d="M2.5 0V4.6M0.1 2.3H4.9" stroke="#fff" stroke-width="1.5"></path></svg>
<div class="t hdr" style="left: 863.8px; top: 356.2px; font-size: 6.3px; letter-spacing: 0px; transform: scaleX(0.8811); transform-origin: 0px 50%;">CREATE</div>
<div class="a" style="left:894.5px;top:353.4px;width:12.3px;height:11px;background:#fff;box-shadow:0 0 0.8px rgba(0,0,0,0.15);border-radius:1px"></div>
<svg class="a" style="left:897.1px;top:357.1px" width="7" height="3.8" viewBox="0 0 7 3.8"><path d="M0 1.9Q3.5 -1.3 7 1.9Q3.5 5.1 0 1.9Z" fill="#6f6f6f"></path><circle cx="3.5" cy="1.9" r="1.25" fill="#e8e8e8"></circle><circle cx="3.5" cy="1.9" r="0.75" fill="#555"></circle></svg>
<div class="a" style="left:911.2px;top:353.4px;width:11.8px;height:11px;background:#fff;box-shadow:0 0 0.8px rgba(0,0,0,0.15);border-radius:1px"></div>
<svg class="a" style="left:914.9px;top:357.4px" width="4.4" height="3.8" viewBox="0 0 4.4 3.8"><path d="M0.4 0.3L4 3.5M4 0.3L0.4 3.5" stroke="#3a3a3a" stroke-width="1.1"></path></svg>
<svg class="a" style="left:133.3px;top:374.3px" width="5.1" height="5.1" viewBox="0 0 5 5"><rect x="0.2" y="0.6" width="4.6" height="4.2" rx="0.4" fill="#8a8a8a"></rect><rect x="0.9" y="2" width="3.2" height="2.2" fill="#dcdcdc"></rect></svg>
<div class="t td" style="left: 139.2px; top: 374.7px; font-size: 6.6px; color: rgb(102, 102, 102); letter-spacing: 0px; transform: scaleX(0.9076); transform-origin: 0px 50%;">12/08/17</div>
<svg class="a" style="left:133.4px;top:383.0px" width="5.1" height="5.1" viewBox="0 0 5 5"><circle cx="2.5" cy="2.5" r="2.1" fill="none" stroke="#777" stroke-width="0.7"></circle><path d="M2.5 1.2V2.6H3.6" fill="none" stroke="#777" stroke-width="0.5"></path></svg>
<div class="t td" style="left: 139.2px; top: 382.5px; font-size: 6.5px; color: rgb(102, 102, 102); letter-spacing: 0px; transform: scaleX(0.8919); transform-origin: 0px 50%;">08:29 AM</div>
<div class="t td" style="left: 185.2px; top: 377.3px; color: rgb(70, 161, 122); font-size: 7px; letter-spacing: 0px; transform: scaleX(0.9613); transform-origin: 0px 50%;">Mathworks Tutoring LLC</div>
<div class="t td" style="left: 521.4px; top: 377.3px; color: rgb(45, 79, 124); font-size: 7px; letter-spacing: 0px; transform: scaleX(0.9396); transform-origin: 0px 50%;">Madison</div>
<div class="t td" style="left: 646.7px; top: 377.3px; font-size: 7px; letter-spacing: 0px; transform: scaleX(0.9108); transform-origin: 0px 50%;">+1 555555555</div>
<svg class="a" style="left:749.7px;top:371px;box-shadow:0 0 1px rgba(0,0,0,0.3)" width="23.2" height="18.7" viewBox="0 0 23.2 18.7"><rect width="23.2" height="18.7" fill="#9a5a30"></rect><path d="M0 0H14L12 9L0 12Z" fill="#c3805c"></path><path d="M8 0H16Q15 5 12 6Q9 4 8 0Z" fill="#4a2a1d"></path><path d="M15 0H23.2V10Q18 12 14 9Z" fill="#7a3f20"></path><ellipse cx="5" cy="4" rx="1" ry="0.6" fill="#3a2015"></ellipse><path d="M0 13Q10 11 23.2 12V14Q10 13 0 15Z" fill="#eadfe5"></path><path d="M0 15L10 14L12 18.7H0Z" fill="#9a72c8"></path><path d="M15 12L22 11V18.7H14Z" fill="#e8d2a0"></path><circle cx="19.5" cy="14.5" r="2.2" fill="#f0c020"></circle><rect x="14" y="17" width="9.2" height="1.7" fill="#3f8a3a"></rect></svg>
<div class="a" style="left:851px;top:373.2px;width:40px;height:14.5px;background:#f9a11b;border-radius:1.2px"></div>
<svg class="a" style="left:855.3px;top:377.8px" width="5" height="4.6" viewBox="0 0 5 4.6"><path d="M2.5 0V4.6M0.1 2.3H4.9" stroke="#fff" stroke-width="1.5"></path></svg>
<div class="t hdr" style="left: 863.8px; top: 377.5px; font-size: 6.3px; letter-spacing: 0px; transform: scaleX(0.8811); transform-origin: 0px 50%;">CREATE</div>
<div class="a" style="left:894.5px;top:374.7px;width:12.3px;height:11px;background:#fff;box-shadow:0 0 0.8px rgba(0,0,0,0.15);border-radius:1px"></div>
<svg class="a" style="left:897.1px;top:378.4px" width="7" height="3.8" viewBox="0 0 7 3.8"><path d="M0 1.9Q3.5 -1.3 7 1.9Q3.5 5.1 0 1.9Z" fill="#6f6f6f"></path><circle cx="3.5" cy="1.9" r="1.25" fill="#e8e8e8"></circle><circle cx="3.5" cy="1.9" r="0.75" fill="#555"></circle></svg>
<div class="a" style="left:911.2px;top:374.7px;width:11.8px;height:11px;background:#fff;box-shadow:0 0 0.8px rgba(0,0,0,0.15);border-radius:1px"></div>
<svg class="a" style="left:914.9px;top:378.7px" width="4.4" height="3.8" viewBox="0 0 4.4 3.8"><path d="M0.4 0.3L4 3.5M4 0.3L0.4 3.5" stroke="#3a3a3a" stroke-width="1.1"></path></svg>
<svg class="a" style="left:364.5px;top:372.8px" width="5" height="5" viewBox="0 0 5 5"><path d="M0.2 0.2H2.6L4.8 2.4L2.4 4.8L0.2 2.6Z" fill="#8a8a8a"></path><circle cx="1.3" cy="1.3" r="0.5" fill="#fff"></circle></svg>
<div class="t td" style="left: 360px; top: 381.1px; font-size: 7px; letter-spacing: 0px; transform: scaleX(0.9717); transform-origin: 0px 50%;">Offer</div>
<div class="a" style="left:461px;top:378px;width:4.7px;height:4.7px;background:#111;border-radius:0.5px"></div>
<div class="card" style="left:116px;top:410px;width:866px;height:80px;box-shadow:0 1px 1px rgba(0,0,0,0.1)"></div>
<div class="a" style="left:116px;top:410.1px;width:866px;height:15.6px;background:#2a807e"></div>
<svg class="a" style="left:120.6px;top:414.4px" width="8" height="7" viewBox="0 0 8 7" fill="#fff"><path d="M0 2.2H2L6 0V6.4L2 4.2H0Z"></path><path d="M1 4.2H2.6L3 7H1.6Z"></path><path d="M6.8 1.8V4.6" stroke="#fff" stroke-width="0.9"></path></svg>
<div class="t hdr" style="left: 130.5px; top: 414.6px; font-size: 7px; letter-spacing: 0px; transform: scaleX(0.9659); transform-origin: 0px 50%;">LATEST ADS</div>
<div class="a" style="left:940px;top:410.8px;width:40.8px;height:14.2px;background:#ffa000;border:0.8px solid #3f8f93;border-radius:1.5px"></div>
<div class="t hdr" style="left: 948.6px; top: 415.1px; font-size: 6.5px; letter-spacing: 0px; transform: scaleX(0.8524); transform-origin: 0px 50%;">SEE ALL</div>
<div class="a" style="left:129px;top:431.3px;width:839.2px;height:15.1px;background:#f2f2f2;border-top:0.5px solid #ececec"></div>
<div class="a" style="left:129px;top:446.4px;width:839.2px;height:14.6px;background:#fff;border-top:0.5px solid #ececec"></div>
<div class="a" style="left:129px;top:461.0px;width:839.2px;height:15.0px;background:#f6f6f6;border-top:0.5px solid #ececec"></div>
<div class="a" style="left:129px;top:476.0px;width:839.2px;height:3.0px;background:#fff;border-top:0.5px solid #ececec"></div>
<div class="t th" style="left: 131.6px; top: 436.3px; font-size: 6.9px; letter-spacing: 0px; transform: scaleX(0.8705); transform-origin: 0px 50%;">BUSINESS NAME</div>
<div class="t th" style="left: 385.4px; top: 436.3px; font-size: 6.9px; letter-spacing: 0px; transform: scaleX(0.8594); transform-origin: 0px 50%;">CATEGORY</div>
<div class="t th" style="left: 496.6px; top: 436.3px; font-size: 6.9px; letter-spacing: 0px; transform: scaleX(0.9293); transform-origin: 0px 50%;">CAMPAIGN</div>
<div class="t th" style="left: 578.7px; top: 436.3px; font-size: 6.9px; letter-spacing: 0px; transform: scaleX(0.8858); transform-origin: 0px 50%;">AD GROUP</div>
<div class="t th" style="left: 758.8px; top: 436.3px; font-size: 6.9px; letter-spacing: 0px; transform: scaleX(0.8931); transform-origin: 0px 50%;">VERSION</div>
<div class="t th" style="left: 802.5px; top: 436.3px; font-size: 6.9px; letter-spacing: 0px; transform: scaleX(0.8446); transform-origin: 0px 50%;">CREATED</div>
<div class="t th" style="left: 856.7px; top: 436.3px; font-size: 6.9px; letter-spacing: 0px; transform: scaleX(0.8721); transform-origin: 0px 50%;">ADS</div>
<div class="t th" style="left: 910.4px; top: 436.3px; font-size: 6.9px; letter-spacing: 0px; transform: scaleX(0.9124); transform-origin: 0px 50%;">ACTIONS</div>
<svg class="a" style="left:132.2px;top:451.0px" width="5" height="7" viewBox="0 0 5 7"><rect x="0.35" y="0.35" width="4.3" height="6.3" rx="0.4" fill="#e8ecf2" stroke="#5a6b85" stroke-width="0.7"></rect><rect x="1.5" y="5.3" width="2" height="0.6" fill="#5a6b85"></rect></svg>
<div class="t td" style="left: 139px; top: 451.5px; color: rgb(44, 74, 122); font-size: 6.8px; letter-spacing: 0px; transform: scaleX(0.8889); transform-origin: 0px 50%;">CPAs</div>
<div class="t td" style="left: 386.4px; top: 451px; font-size: 7px; letter-spacing: 0px; transform: scaleX(0.9026); transform-origin: 0px 50%;">Lead Kahuna</div>
<div class="t td" style="left: 497.5px; top: 451px; font-size: 7px; letter-spacing: 0px; transform: scaleX(0.9219); transform-origin: 0px 50%;">Campaign 3</div>
<div class="t td" style="left: 579.6px; top: 451px; font-size: 7px; letter-spacing: 0px; transform: scaleX(0.9109); transform-origin: 0px 50%;">Lead Kahuna Campaign 3</div>
<div class="t td" style="left: 769.3px; top: 451px; font-size: 7px; letter-spacing: 0px; transform: scaleX(0.9046); transform-origin: 0px 50%;">v1</div>
<div class="t td" style="left: 803.4px; top: 451.6px; font-size: 6.6px; color: rgb(102, 102, 102); letter-spacing: 0px; transform: scaleX(1.0026); transform-origin: 0px 50%;">01/30/2018</div>
<svg class="a" style="left:850px;top:449.0px" width="12.7" height="10.6" viewBox="0 0 12.7 10.6"><rect width="12.7" height="10.6" fill="#e58f3c"></rect><rect x="9" width="3.7" height="10.6" fill="#f5e8e8"></rect><rect x="9.6" y="2" width="1.4" height="5" fill="#e68aa0"></rect><rect x="10" y="7.5" width="2.7" height="3.1" fill="#f4c22a"></rect><path d="M3 1.5H8V3H3Z" fill="#222"></path><path d="M3.2 3H7.6V7.5Q5.4 9 3.2 7.5Z" fill="#eee"></path><path d="M4.3 4H6.5V6.5H4.3Z" fill="#333"></path><path d="M1 6L3 4V10.6H1Z" fill="#7a4a8a"></path><path d="M7.8 4L9 5V10.6H7.6Z" fill="#b03030"></path></svg>
<div class="a" style="left:864.6px;top:448.2px;width:10.8px;height:10.6px;background:#1f4b76;border-radius:1px"></div>
<div class="t hdr" style="left:867.8px;top:451.0px;font-size:7px">4</div>
<svg class="a" style="left:919.3px;top:452.6px" width="7.4" height="4.3" viewBox="0 0 7 3.8"><path d="M0 1.9Q3.5 -1.3 7 1.9Q3.5 5.1 0 1.9Z" fill="#555"></path><circle cx="3.5" cy="1.9" r="1.25" fill="#eee"></circle><circle cx="3.5" cy="1.9" r="0.75" fill="#444"></circle></svg>
<svg class="a" style="left:132.2px;top:464.8px" width="5" height="7" viewBox="0 0 5 7"><rect x="0.35" y="0.35" width="4.3" height="6.3" rx="0.4" fill="#e8ecf2" stroke="#5a6b85" stroke-width="0.7"></rect><rect x="1.5" y="5.3" width="2" height="0.6" fill="#5a6b85"></rect></svg>
<div class="t td" style="left: 139px; top: 465.3px; color: rgb(44, 74, 122); font-size: 6.8px; letter-spacing: 0px; transform: scaleX(0.8889); transform-origin: 0px 50%;">CPAs</div>
<div class="t td" style="left: 386.4px; top: 464.8px; font-size: 7px; letter-spacing: 0px; transform: scaleX(0.9026); transform-origin: 0px 50%;">Rep Videos</div>
<div class="t td" style="left: 497.5px; top: 464.8px; font-size: 7px; letter-spacing: 0px; transform: scaleX(0.9219); transform-origin: 0px 50%;">Campaign 2</div>
<div class="t td" style="left: 579.6px; top: 464.8px; font-size: 7px; letter-spacing: 0px; transform: scaleX(0.9109); transform-origin: 0px 50%;">Rep Videos Campaign 2</div>
<div class="t td" style="left: 769.3px; top: 464.8px; font-size: 7px; letter-spacing: 0px; transform: scaleX(0.9046); transform-origin: 0px 50%;">v1</div>
<div class="t td" style="left: 803.4px; top: 465.4px; font-size: 6.6px; color: rgb(102, 102, 102); letter-spacing: 0px; transform: scaleX(1.0026); transform-origin: 0px 50%;">01/30/2018</div>
<svg class="a" style="left:850px;top:462.8px" width="12.7" height="10.6" viewBox="0 0 12.7 10.6"><rect width="12.7" height="10.6" fill="#e58f3c"></rect><rect x="9" width="3.7" height="10.6" fill="#f5e8e8"></rect><rect x="9.6" y="2" width="1.4" height="5" fill="#e68aa0"></rect><rect x="10" y="7.5" width="2.7" height="3.1" fill="#f4c22a"></rect><path d="M3 1.5H8V3H3Z" fill="#222"></path><path d="M3.2 3H7.6V7.5Q5.4 9 3.2 7.5Z" fill="#eee"></path><path d="M4.3 4H6.5V6.5H4.3Z" fill="#333"></path><path d="M1 6L3 4V10.6H1Z" fill="#7a4a8a"></path><path d="M7.8 4L9 5V10.6H7.6Z" fill="#b03030"></path></svg>
<div class="a" style="left:864.6px;top:462.0px;width:10.8px;height:10.6px;background:#1f4b76;border-radius:1px"></div>
<div class="t hdr" style="left:867.8px;top:464.8px;font-size:7px">1</div>
<svg class="a" style="left:919.3px;top:466.4px" width="7.4" height="4.3" viewBox="0 0 7 3.8"><path d="M0 1.9Q3.5 -1.3 7 1.9Q3.5 5.1 0 1.9Z" fill="#555"></path><circle cx="3.5" cy="1.9" r="1.25" fill="#eee"></circle><circle cx="3.5" cy="1.9" r="0.75" fill="#444"></circle></svg>
<svg class="a" style="left:850px;top:477.0px" width="12.7" height="10.6" viewBox="0 0 12.7 10.6"><rect width="12.7" height="10.6" fill="#e58f3c"></rect><rect x="9" width="3.7" height="10.6" fill="#f5e8e8"></rect><rect x="9.6" y="2" width="1.4" height="5" fill="#e68aa0"></rect><rect x="10" y="7.5" width="2.7" height="3.1" fill="#f4c22a"></rect><path d="M3 1.5H8V3H3Z" fill="#222"></path><path d="M3.2 3H7.6V7.5Q5.4 9 3.2 7.5Z" fill="#eee"></path><path d="M4.3 4H6.5V6.5H4.3Z" fill="#333"></path><path d="M1 6L3 4V10.6H1Z" fill="#7a4a8a"></path><path d="M7.8 4L9 5V10.6H7.6Z" fill="#b03030"></path></svg>
<div class="a" style="left:864.6px;top:476px;width:10.8px;height:3px;background:#1f4b76"></div>
<!-- /tables -->
<!-- need help tab -->
<div class="a" style="left:972px;top:212px;width:20px;height:71px;background:#fe0000;border-radius:1.5px 0 0 1.5px;z-index:20"></div>
<div class="t" style="left:982.6px;top:238.6px;font-size:7px;color:#fff;transform:translate(-50%,-50%) rotate(-90deg);transform-origin:center;z-index:21">Need Help?</div>
<svg class="a" style="left:978.8px;top:257.7px;z-index:21" width="7.2" height="6.2" viewBox="0 0 7.2 6.2"><path d="M0.6 3Q0.4 1.2 2.2 1.2L3 0.4Q4.2 0.2 4.6 1.2H6Q6.8 1.4 6.6 2.4V4.4Q6.4 5.8 4.8 5.8H2.4Q0.7 5.8 0.6 4Z" fill="#f3c02c" stroke="#8a5a10" stroke-width="0.5"></path></svg>
<svg class="a" style="left:978.9px;top:268px;z-index:21" width="6" height="6.8" viewBox="0 0 6 6.8"><path d="M0.6 2.3H2.2L5.3 0.6V6.2L2.2 4.5H0.6Z" fill="#a00a0a" stroke="#fff" stroke-width="0.6"></path></svg>

</body></html>
